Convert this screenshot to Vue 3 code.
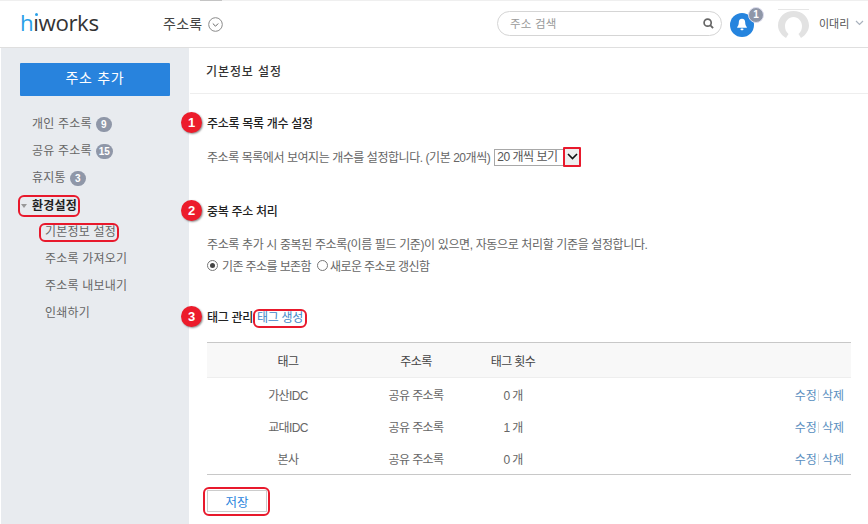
<script setup>
const nav = [
  { label: '개인 주소록', count: '9' },
  { label: '공유 주소록', count: '15' },
  { label: '휴지통', count: '3' },
]
const sub = ['주소록 가져오기', '주소록 내보내기', '인쇄하기']
const rows = [
  { tag: '가산IDC', book: '공유 주소록', n: '0 개' },
  { tag: '교대IDC', book: '공유 주소록', n: '1 개' },
  { tag: '본사', book: '공유 주소록', n: '0 개' },
]
</script>

<template>
  <div class="page">
    <header class="top">
      <div class="logo"><span class="hi">h</span><span class="idot">ı</span>works</div>
      <div class="app">주소록
        <svg class="appchev" width="15" height="15" viewBox="0 0 15 15"><circle cx="7.5" cy="7.5" r="6.8" fill="none" stroke="#8a8a8a"/><path d="M4.8 6.5l2.7 2.7 2.7-2.7" fill="none" stroke="#666" stroke-width="1"/></svg>
      </div>
      <div class="search">
        <span>주소 검색</span>
        <svg width="11" height="11" viewBox="0 0 13 13"><circle cx="5.5" cy="5.5" r="4.2" fill="none" stroke="#666" stroke-width="2"/><path d="M8.5 8.5l3.4 3.4" stroke="#666" stroke-width="2.2"/></svg>
      </div>
      <div class="bell">
        <svg width="12" height="13" viewBox="0 0 12 13"><path d="M6 0.8c-2.2 0-3.2 1.7-3.2 3.7 0 2.3-.8 3.6-1.6 4.5v.8h9.6V9c-.8-.9-1.6-2.2-1.6-4.5 0-2-1-3.7-3.2-3.7z" fill="#fff"/><rect x="4.5" y="10.4" width="3" height="1.8" rx=".9" fill="#fff"/></svg>
        <span class="bellcount">1</span>
      </div>
      <svg class="avatar" width="31" height="30" viewBox="0 0 31 30">
        <path d="M0 .5h31" stroke="#e6e6e6" fill="none"/>
        <path d="M8 29C3 26 0 21 0 16.500C0 8 7 2 15.500 2S31 8 31 16.500C31 21 28 26 23 29L20.500 25C23 23 24 20 24 17C24 12 20 8 15.500 8S7 12 7 17C7 20 8 23 10.500 25Z" fill="#e2e2e2"/>
      </svg>
      <div class="user">이대리
        <svg width="9" height="6" viewBox="0 0 9 6"><path d="M1 1l3.500 3.500L8 1" fill="none" stroke="#a9b2bd" stroke-width="1.200"/></svg>
      </div>
    </header>

    <div class="body">
      <aside class="side">
        <button class="add">주소 추가</button>
        <ul class="nav">
          <li v-for="n in nav" :key="n.label" class="item">{{ n.label }} <span class="badge">{{ n.count }}</span></li>
          <li class="item active">
            <span class="tri"></span>
            <span class="ring ring-env">환경설정</span>
          </li>
          <li class="item subitem"><span class="ring ring-basic">기본정보 설정</span></li>
          <li v-for="s in sub" :key="s" class="item subitem">{{ s }}</li>
        </ul>
      </aside>

      <main class="main">
        <div class="title">기본정보 설정</div>

        <section class="sec sec1">
          <h3 class="head"><span class="num">1</span>주소록 목록 개수 설정</h3>
          <p class="line line1">주소록 목록에서 보여지는 개수를 설정합니다. (기본 20개씩)
            <span class="select"><span class="selval">20 개씩 보기</span><span class="selbtn">
              <svg width="11" height="7" viewBox="0 0 11 7"><path d="M1 1l4.500 4.500L10 1" fill="none" stroke="#111" stroke-width="1.600"/></svg>
            </span></span>
          </p>
        </section>

        <section class="sec sec2">
          <h3 class="head"><span class="num">2</span>중복 주소 처리</h3>
          <p class="line line2">주소록 추가 시 중복된 주소록(이름 필드 기준)이 있으면, 자동으로 처리할 기준을 설정합니다.</p>
          <p class="line radios">
            <span class="radio on"></span>기존 주소를 보존함
            <span class="radio second"></span>새로운 주소로 갱신함
          </p>
        </section>

        <section class="sec sec3">
          <h3 class="head"><span class="num">3</span>태그 관리<span class="ring ring-tag">태그 생성</span></h3>
          <table class="tbl">
            <thead>
              <tr><th class="c1">태그</th><th class="c2">주소록</th><th class="c3">태그 횟수</th><th></th></tr>
            </thead>
            <tbody>
              <tr v-for="r in rows" :key="r.tag">
                <td class="c1">{{ r.tag }}</td><td class="c2">{{ r.book }}</td><td class="c3">{{ r.n }}</td>
                <td class="acts"><span>수정</span><i></i><span>삭제</span></td>
              </tr>
            </tbody>
          </table>
          <button class="save">저장</button>
        </section>
      </main>
    </div>
  </div>
</template>

<style>
html, body { margin: 0; background: #fff; }
</style>

<style scoped>
.page {
  width: 868px; height: 524px; overflow: hidden; display: flex; flex-direction: column;
  font-family: "Liberation Sans", "Noto Sans CJK KR", sans-serif; font-size: 12px; color: #666;
}
.top {
  position: relative; height: 46px; flex: none; display: flex; align-items: center; background: #fff;
  border-top: 1px solid #efefef; border-bottom: 1px solid #dfdfdf;
}
.top::before { content: ""; position: absolute; left: 200px; top: -1px; width: 22px; height: 1px; background: #c4c4c4; }
.logo { position: relative; margin-left: 20px; width: 143px; font: 400 22.300px/30px "Open Sans", sans-serif; letter-spacing: -.4px; color: #333; margin-top: -2px; }
.hi { color: #29a0e8; }
.idot { position: relative; }
.idot::before { content: ""; position: absolute; left: 2px; top: 6px; width: 3px; height: 3px; border-radius: 50%; background: #29a0e8; }
.app { width: 334px; font-size: 14px; letter-spacing: .3px; color: #444; display: flex; align-items: center; gap: 5px; margin-top: -2px; }
.appchev { margin-top: 3px; }
.search {
  width: 204px; height: 23px; border: 1px solid #d5d5d5; border-radius: 13px; display: flex; align-items: center;
  justify-content: space-between; padding: 0 7px 0 12px; color: #999; font-size: 11.500px; letter-spacing: .2px; margin-top: -1px;
}
.search span { margin-top: -2px; }
.bell {
  position: relative; width: 24px; height: 24px; margin-left: 8px; border-radius: 50%; background: #2584de;
  display: flex; align-items: center; justify-content: center; margin-top: 1px;
}
.bellcount {
  position: absolute; left: 18px; top: -6px; width: 14px; height: 14px; border-radius: 50%; background: #8f97a8;
  border: 1px solid #dde; color: #fff; font-size: 10px; font-weight: 700; text-align: center; line-height: 14px;
}
.avatar { flex: none; margin-left: 24px; margin-top: -1px; }
.user { margin-left: 10px; font-size: 11px; color: #555; display: flex; align-items: center; gap: 6px; margin-top: -2px; }

.body { flex: 1; display: flex; min-height: 0; }
.side { width: 188px; flex: none; margin-left: 1px; background: #e8ebef; box-sizing: border-box; padding: 15px 0 0 19px; }
.add {
  display: block; width: 150px; height: 33px; border: 0; padding: 0 0 6px; background: #2883dd; color: #fff; border-radius: 1px;
  font: 14px "Liberation Sans", "Noto Sans CJK KR", sans-serif; letter-spacing: .7px;
}
.nav { list-style: none; margin: 15px 0 0; padding: 0; }
.item { height: 27px; line-height: 27px; padding-left: 12px; color: #666; display: flex; align-items: center; gap: 4px; letter-spacing: .2px; white-space: nowrap; }
.badge {
  background: #8f97a8; color: #fff; font-size: 10px; font-weight: 700; border-radius: 8px; min-width: 16px; height: 15px; line-height: 15px;
  text-align: center; box-sizing: border-box; padding: 0 3px; letter-spacing: 0;
}
.active { color: #222; font-weight: 700; position: relative; }
.tri {
  position: absolute; left: 1px; top: 12px; border-left: 3px solid transparent; border-right: 3px solid transparent; border-top: 4px solid #999;
}
.subitem { padding-left: 25px; }
.ring { position: relative; }
.ring::after {
  content: ""; position: absolute; border: 2px solid #e8192c; border-radius: 6px; pointer-events: none;
}
.ring-env { line-height: 18px; }
.ring-env::after { left: -14px; right: -3px; top: -2px; bottom: -2px; }
.ring-basic { line-height: 17px; }
.ring-basic::after { left: -6px; right: -3px; top: -1px; bottom: -1px; }
.ring-tag { color: #3f87c8; margin-left: 4px; font-weight: 400; display: inline-block; }
.ring-tag::after { left: -4px; right: -4px; top: -1px; bottom: -2px; }

.main { flex: 1; min-width: 0; padding-left: 1px; }
.title { height: 45px; line-height: 48px; border-bottom: 1px solid #eee; padding-left: 16px; color: #333; font-weight: 500; letter-spacing: .9px; }
.sec { margin-left: 17px; }
.sec1 { margin-top: 22px; }
.sec2 { margin-top: 39px; }
.sec3 { margin-top: 36px; }
.head { position: relative; margin: 0; font-size: 12px; line-height: 16px; font-weight: 500; color: #222; letter-spacing: -.3px; display: flex; align-items: center; }
.num {
  position: absolute; left: -26px; top: -4px; width: 21px; height: 21px; border-radius: 50%; background: #ec1c2b; color: #fff;
  font-weight: 700; font-size: 13px; text-align: center; line-height: 21px; letter-spacing: 0; box-shadow: 1px 1px 2px rgba(0,0,0,.45);
}
.line { margin: 0; color: #666; letter-spacing: -.37px; white-space: nowrap; display: flex; align-items: center; }
.line1 { margin-top: 15px; height: 18px; gap: 4px; letter-spacing: -.45px; }
.select { position: relative; display: inline-flex; height: 15px; width: 68px; border: 1px solid #a8a8a8; align-items: center; margin-top: 2px; }
.selval { padding-left: 2px; line-height: 15px; color: #555; letter-spacing: -.5px; }
.selbtn {
  position: absolute; left: 68px; top: -3px; width: 14px; height: 16px; border: 2px solid #e8192c; background: #eee;
  display: flex; align-items: center; justify-content: center; border-radius: 1px;
}
.line2 { margin-top: 14px; height: 18px; }
.radios { height: 18px; margin-top: 4px; letter-spacing: -.6px; }
.radio { width: 9px; height: 9px; border: 1px solid #777; border-radius: 50%; margin-right: 4px; position: relative; }
.radio.on::after { content: ""; position: absolute; left: 2px; top: 2px; width: 5px; height: 5px; border-radius: 50%; background: #444; }
.radio.second { margin-left: 6px; margin-right: 2px; }

.tbl { width: 644px; border-collapse: collapse; margin-top: 16px; table-layout: fixed; color: #666; letter-spacing: -.6px; }
.tbl th { font-weight: 400; color: #444; height: 34px; background: #f8f8f8; border-top: 1px solid #c8c8c8; border-bottom: 1px solid #eee; padding: 0; }
.tbl td { height: 32px; padding: 0; text-align: center; }
.tbl tbody tr:last-child td { border-bottom: 1px solid #c8c8c8; }
.c1 { width: 162px; }
.c2 { width: 94px; }
.c3 { width: 100px; }
.tbl .acts { text-align: right; padding-right: 7px; color: #5b8fc0; letter-spacing: 0; }
.acts i { display: inline-block; width: 1px; height: 11px; background: #ddd; margin: 0 3px 0 1px; vertical-align: -1px; }
.save {
  display: block; margin: 15px 0 0; width: 60px; height: 22px; background: #fff; color: #2883dd; border: 1px solid #ccc; position: relative; padding: 0;
  font: 12.500px "Liberation Sans", "Noto Sans CJK KR", sans-serif;
}
.save::after { content: ""; position: absolute; left: -5px; right: -4px; top: -4px; bottom: -5px; border: 2px solid #e8192c; border-radius: 6px; }
</style>
